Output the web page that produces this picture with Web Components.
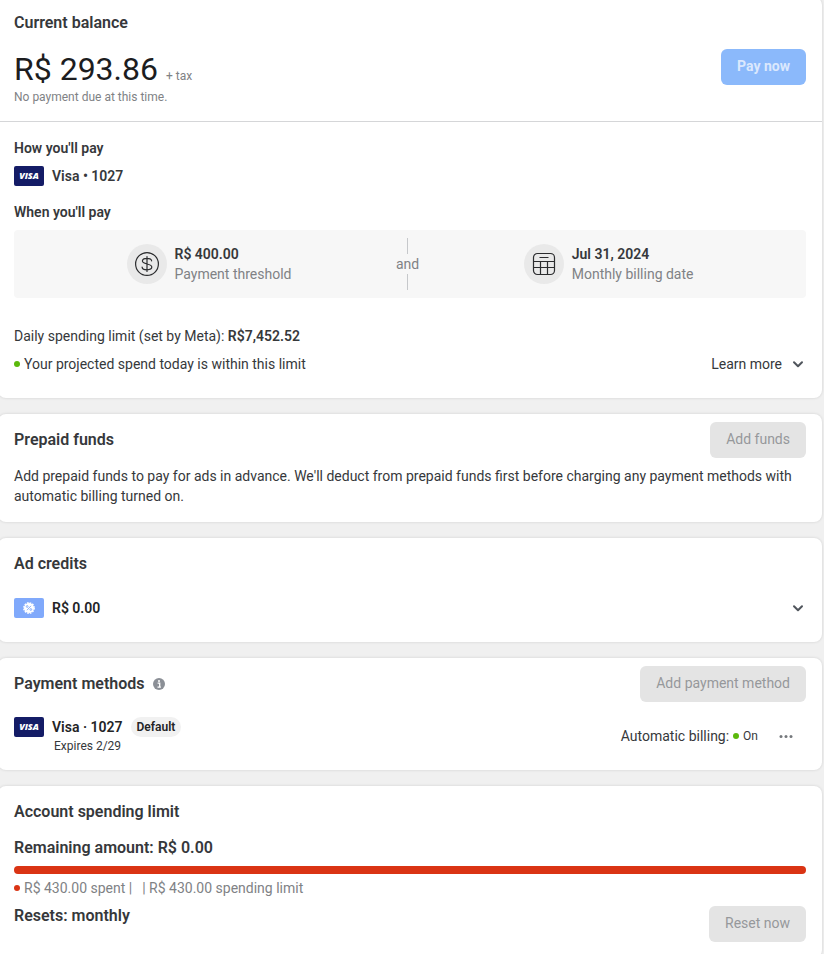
<!DOCTYPE html>
<html lang="en">
<head>
<meta charset="utf-8">
<meta name="viewport" content="width=device-width, initial-scale=1">
<title>Billing</title>
<style>
    :root {
        --page: #f0f0f0; --card: #fff; --text: #36383b; --strong: #232426;
        --muted: #808285; --line: #d5d6d8; --soft: #f7f7f7;
        --green: #5bb90b; --red: #da3414;
    }
    body {
        margin: 0; background: var(--page); color: var(--text);
        font: 14px/20px Roboto, "Liberation Sans", sans-serif;
        overflow: hidden;
    }
</style>
</head>
<body>
<billing-page></billing-page>

<script>
function makeTemplate(html) {
    const template = document.createElement('template')
    template.innerHTML = html
    return template
}

class BaseElement extends HTMLElement {
    constructor() {
        super()
        this.attachShadow({mode: 'open'}).appendChild(this.constructor.template.content.cloneNode(true))
    }
}

const ICONS = {
    chevron: `<svg width="16" height="16" viewBox="0 0 16 16" fill="none" stroke="#50555c" stroke-width="2" stroke-linecap="round" stroke-linejoin="round"><path d="M4 6.2 8 10.2 12 6.2"/></svg>`,
    dots: `<svg width="16" height="16" viewBox="0 0 16 16" fill="#75787c"><circle cx="3" cy="8.5" r="1.5"/><circle cx="8" cy="8.5" r="1.5"/><circle cx="13" cy="8.5" r="1.5"/></svg>`,
    info: `<svg width="12" height="12" viewBox="0 0 12 12"><circle cx="6" cy="6" r="6" fill="#8b8f96"/><circle cx="6" cy="3.1" r="1" fill="#fff"/><path d="M4.6 5.2H6.7V9M4.5 9.1H7.9" fill="none" stroke="#fff" stroke-width="1.3"/></svg>`,
    dollar: `<svg width="24" height="24" viewBox="0 0 24 24" fill="none" stroke="#2b2c2e" stroke-width="1.2" stroke-linecap="round"><circle cx="12" cy="12" r="11.4"/><path d="M16.6 8.8C16.4 7.2 14.3 6.3 12 6.3S7.400 7.300 7.400 9.100C7.400 11 9.700 11.500 12 12S16.800 13.100 16.800 15.100C16.800 16.800 14.500 17.800 12 17.800S7.300 16.900 7.100 15.100M12 4.500V19.500"/></svg>`,
    calendar: `<svg width="24" height="24" viewBox="0 0 24 24" fill="none" stroke="#2b2c2e" stroke-width="1.200"><rect x="1.500" y="1.500" width="21" height="21" rx="4"/><path d="M7.500 5.500H16.500M1.500 9.500H22.500M1.500 15.500H22.500M8.500 9.500V22.500M15.500 9.500V22.500"/></svg>`,
    coupon: `<svg width="30" height="20" viewBox="0 0 30 20"><rect width="30" height="20" rx="2" fill="#80a9fb"/><circle cx="15" cy="10" r="5" fill="#fff"/><circle cx="15" cy="10" r="5.200" fill="none" stroke="#fff" stroke-width="1.400" stroke-dasharray="1.700 1.023"/><g fill="none" stroke="#80a9fb" stroke-width=".9"><path d="M17 7.800 13 12.200"/><circle cx="13.200" cy="8.500" r=".9"/><circle cx="16.800" cy="11.500" r=".9"/></g></svg>`,
}

class BillingIcon extends BaseElement {
    static template = makeTemplate(`
        <style>
            :host { display: inline-flex; flex: none; }
            svg { display: block; }
        </style>
    `)

    connectedCallback() {
        const holder = makeTemplate(ICONS[this.getAttribute('name')] ?? '')
        this.shadowRoot.appendChild(holder.content)
    }
}
customElements.define('billing-icon', BillingIcon)

class VisaBadge extends BaseElement {
    static template = makeTemplate(`
        <style>
            :host {
                display: inline-flex; flex: none; align-items: center; justify-content: center;
                width: 30px; height: 20px; border-radius: 2px;
                background: #141c66; color: #fff;
                font: italic 800 9px/20px "Open Sans", sans-serif;
            }
        </style>
        <span>VISA</span>
    `)
}
customElements.define('visa-badge', VisaBadge)

class StatusDot extends BaseElement {
    static template = makeTemplate(`
        <style>
            :host {
                display: inline-block; flex: none; width: 6px; height: 6px;
                border-radius: 50%; background: var(--green);
            }
            :host([tone="red"]) { background: var(--red); }
        </style>
    `)
}
customElements.define('status-dot', StatusDot)

class BillingButton extends BaseElement {
    static template = makeTemplate(`
        <style>
            :host { display: inline-flex; flex: none; }
            button {
                height: 36px; padding: 0 16px 2px; border: 0; border-radius: 6px;
                background: #e4e4e4; color: #96989b; font: inherit;
            }
            :host([primary]) button { background: #8bb9fb; color: #dbe8fd; font-weight: 700; }
        </style>
        <button type="button" disabled><slot></slot></button>
    `)
}
customElements.define('billing-button', BillingButton)

class BillingCard extends BaseElement {
    static template = makeTemplate(`
        <style>
            :host {
                display: block; background: var(--card); border-radius: 8px;
                box-shadow: 0 0 3px rgba(0, 0, 0, .14);
                padding: 8px 16px 16px;
            }
            header { display: flex; align-items: center; justify-content: space-between; height: 36px; }
            h2 {
                display: flex; align-items: center; gap: 8px;
                margin: 0; font-size: 16px; font-weight: 600;
            }
        </style>
        <header>
            <h2><slot name="title"></slot></h2>
            <slot name="action"></slot>
        </header>
        <slot></slot>
    `)
}
customElements.define('billing-card', BillingCard)

class BillingFact extends BaseElement {
    static template = makeTemplate(`
        <style>
            :host { display: flex; flex: 1 1 auto; align-items: center; justify-content: center; gap: 8px; }
            .circle {
                display: flex; align-items: center; justify-content: center;
                width: 40px; height: 40px; border-radius: 50%; background: #e9e9e9;
            }
            .value { font-weight: 600; }
            .label { color: var(--muted); }
        </style>
        <div class="circle"><slot name="icon"></slot></div>
        <div>
            <div class="value"><slot></slot></div>
            <div class="label"><slot name="label"></slot></div>
        </div>
    `)
}
customElements.define('billing-fact', BillingFact)

class BillingPage extends BaseElement {
    static template = makeTemplate(`
        <style>
            :host { display: block; }
            main { display: flex; flex-direction: column; gap: 16px; margin: -3px 2px 0 -2px; }
            h3, p { margin: 0; }
            h3 { font-size: 14px; font-weight: 600; }
            b { font-weight: 600; }
            .row { display: flex; align-items: center; gap: 8px; }
            .between { display: flex; align-items: center; justify-content: space-between; }
            .dotted { display: flex; align-items: center; gap: 4px; }
            .method { font-weight: 600; }
            button {
                display: flex; align-items: center; gap: 8px; padding: 0;
                border: 0; background: none; color: inherit; font: inherit;
            }

            .balance { align-items: flex-start; padding: 8px 0 16px; }
            .amount { font-size: 32px; line-height: 40px; font-weight: 400; color: #1c1d1f; }
            .amount small { font-size: 12px; line-height: 16px; color: var(--muted); }
            .note { font-size: 12px; line-height: 16px; color: var(--muted); }
            hr { margin: 0 -16px 16px; border: 0; border-top: 1px solid var(--line); }
            .how { margin: 8px 0 16px; }
            .facts {
                display: flex; margin: 8px 0 28px; padding: 8px;
                border-radius: 4px; background: var(--soft);
            }
            .and { display: flex; flex-direction: column; align-items: center; color: var(--muted); }
            .and::before, .and::after { content: ""; width: 1px; height: 16px; background: #c6c8cb; }
            .projected { margin: 8px 0; }

            .prepaid { margin-top: 8px; }
            .credits { padding: 16px 0 8px; }
            .visa { padding-top: 15px; }
            .visa .row { align-items: flex-start; }
            .name { display: flex; gap: 8px; font-weight: 600; color: var(--strong); }
            .chip { padding: 0 6px; border-radius: 10px; background: #f1f1f1; font-size: 12px; }
            .expires { padding: 1px 2px 0; font-size: 12px; line-height: 16px; }
            .auto small { font-size: 12px; }
            .more { width: 40px; height: 36px; margin-left: 4px; justify-content: center; }

            .big { font-size: 16px; font-weight: 600; }
            .remaining { margin-top: 8px; }
            .bar { height: 8px; margin: 8px 0 4px; border-radius: 4px; background: var(--red); }
            .spent { color: var(--muted); }
            .limit { margin-left: 6px; }
            .resets { align-items: flex-start; margin-top: 8px; }
        </style>
        <main>
            <billing-card>
                <span slot="title">Current balance</span>
                <div class="between balance">
                    <div>
                        <div class="amount">R$ 293.86 <small>+ tax</small></div>
                        <p class="note">No payment due at this time.</p>
                    </div>
                    <billing-button primary>Pay now</billing-button>
                </div>
                <hr>
                <h3>How you'll pay</h3>
                <div class="row how">
                    <visa-badge></visa-badge>
                    <span class="method">Visa • 1027</span>
                </div>
                <h3>When you'll pay</h3>
                <div class="facts">
                    <billing-fact>
                        <billing-icon slot="icon" name="dollar"></billing-icon>
                        R$ 400.00
                        <span slot="label">Payment threshold</span>
                    </billing-fact>
                    <div class="and">and</div>
                    <billing-fact>
                        <billing-icon slot="icon" name="calendar"></billing-icon>
                        Jul 31, 2024
                        <span slot="label">Monthly billing date</span>
                    </billing-fact>
                </div>
                <p>Daily spending limit (set by Meta): <b>R$7,452.52</b></p>
                <div class="between projected">
                    <div class="dotted"><status-dot></status-dot>Your projected spend today is within this limit</div>
                    <button type="button">Learn more <billing-icon name="chevron"></billing-icon></button>
                </div>
            </billing-card>

            <billing-card>
                <span slot="title">Prepaid funds</span>
                <billing-button slot="action">Add funds</billing-button>
                <p class="prepaid">Add prepaid funds to pay for ads in advance. We'll deduct from prepaid funds first before charging any payment methods with automatic billing turned on.</p>
            </billing-card>

            <billing-card>
                <span slot="title">Ad credits</span>
                <div class="between credits">
                    <div class="row">
                        <billing-icon name="coupon"></billing-icon>
                        <span class="name">R$ 0.00</span>
                    </div>
                    <button type="button" aria-label="Show ad credits"><billing-icon name="chevron"></billing-icon></button>
                </div>
            </billing-card>

            <billing-card>
                <span slot="title">Payment methods</span>
                <billing-icon slot="title" name="info"></billing-icon>
                <billing-button slot="action">Add payment method</billing-button>
                <div class="between visa">
                    <div class="row">
                        <visa-badge></visa-badge>
                        <div>
                            <div class="name">Visa · 1027 <span class="chip">Default</span></div>
                            <div class="expires">Expires 2/29</div>
                        </div>
                    </div>
                    <div class="dotted auto">
                        Automatic billing:
                        <status-dot></status-dot>
                        <small>On</small>
                        <button class="more" type="button" aria-label="More options"><billing-icon name="dots"></billing-icon></button>
                    </div>
                </div>
            </billing-card>

            <billing-card>
                <span slot="title">Account spending limit</span>
                <div class="big remaining">Remaining amount: R$ 0.00</div>
                <div class="bar" role="progressbar" aria-label="Spent" aria-valuenow="100"></div>
                <div class="dotted spent">
                    <status-dot tone="red"></status-dot>
                    <span>R$ 430.00 spent |</span>
                    <span class="limit">| R$ 430.00 spending limit</span>
                </div>
                <div class="between resets">
                    <div class="big">Resets: monthly</div>
                    <billing-button>Reset now</billing-button>
                </div>
            </billing-card>
        </main>
    `)
}
customElements.define('billing-page', BillingPage)
</script>
</body>
</html>
